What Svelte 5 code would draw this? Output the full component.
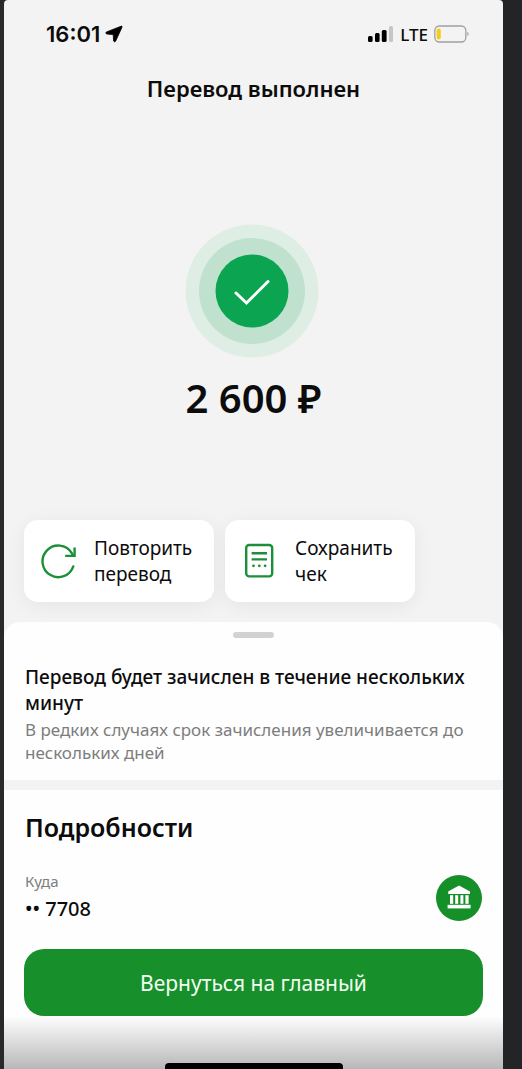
<script lang="ts">
    interface Action {
        id: string;
        icon: 'repeat' | 'receipt';
        label: string;
    }

    const actions: Action[] = [
        { id: 'repeat', icon: 'repeat', label: 'Повторить перевод' },
        { id: 'receipt', icon: 'receipt', label: 'Сохранить чек' },
    ];

    const amount = '2 600 ₽';
    const account = '•• 7708';
</script>

<div class="backdrop">
    <div class="screen">
        <header class="status-bar">
            <div class="time">
                <span>16:01</span>
                <svg width="18" height="18" viewBox="0 0 18 18" aria-hidden="true">
                    <path d="M16.2 1.2 L1.4 7 Q0 8 1.6 9 L8.2 9.6 L8.6 16 Q9.5 17.6 10.6 16.2 L17 2.2 Q17.4 0.8 16.2 1.2Z" fill="#000" stroke="#000" stroke-width="0.8" stroke-linejoin="round" />
                </svg>
            </div>
            <div class="signal">
                <svg width="26" height="17" viewBox="0 0 26 17" aria-hidden="true">
                    <rect x="0" y="10" width="4.6" height="6" rx="1.5" fill="#000" />
                    <rect x="7" y="7" width="4.6" height="9" rx="1.5" fill="#000" />
                    <rect x="13.8" y="4" width="4.8" height="12" rx="1.5" fill="#000" />
                    <rect x="21" y="0" width="4" height="16" rx="1.5" fill="#c6c6c6" />
                </svg>
                <span>LTE</span>
                <svg width="35" height="18" viewBox="0 0 35 18" aria-hidden="true">
                    <rect x="0.8" y="1" width="31" height="16" rx="4.5" fill="none" stroke="#a0a0a0" stroke-width="1.3" />
                    <rect x="2.6" y="3.4" width="4.2" height="11" rx="2" fill="#f7cb1c" />
                    <path d="M33.3 6.8 Q36 9 33.3 11.2Z" fill="#a0a0a0" />
                </svg>
            </div>
        </header>

        <main>
            <h1>Перевод выполнен</h1>

            <section class="result">
                <svg width="138" height="134" viewBox="0 0 138 134" aria-hidden="true">
                    <circle cx="67" cy="67" r="66.5" fill="#deeee5" />
                    <circle cx="67" cy="67" r="53" fill="#bfe1ce" />
                    <circle cx="67" cy="67" r="36.5" fill="#0ba551" />
                    <path d="M51 69 L61.5 79 L83 57.5" fill="none" stroke="#fff" stroke-width="3" stroke-linecap="round" stroke-linejoin="miter" />
                </svg>
                <p class="amount">{amount}</p>
            </section>

            <div class="actions">
                {#each actions as action (action.id)}
                    <button type="button" class="action">
                        {#if action.icon === 'repeat'}
                            <svg width="36" height="36" viewBox="0 0 36 36" fill="none" stroke="#1b9038" stroke-width="2.4" aria-hidden="true">
                                <path d="M33.3 23.4 A15.8 15.8 0 1 1 31.6 9.8 L33 12.5" stroke-linecap="round" />
                                <path d="M34.6 4.6 V12.9 H25.2" />
                            </svg>
                        {:else}
                            <svg width="36" height="36" viewBox="0 0 36 36" fill="none" stroke="#1b9038" stroke-width="2.4" aria-hidden="true">
                                <rect x="5.2" y="2" width="26" height="31.4" rx="3" />
                                <path d="M10.6 10.2 H26 M10.6 16.4 H26" />
                                <path d="M12.5 22.8 h.01 M18.3 22.8 h.01 M24.1 22.8 h.01" stroke-width="2.8" stroke-linecap="round" />
                            </svg>
                        {/if}
                        <span>{action.label}</span>
                    </button>
                {/each}
            </div>

            <section class="sheet">
                <div class="grabber"></div>
                <div class="notice">
                    <h2>Перевод будет зачислен в течение нескольких минут</h2>
                    <p>В редких случаях срок зачисления увеличивается до нескольких дней</p>
                </div>
                <div class="details">
                    <h3>Подробности</h3>
                    <div class="row">
                        <dl>
                            <dt>Куда</dt>
                            <dd>{account}</dd>
                        </dl>
                        <svg width="46" height="46" viewBox="0 0 46 46" aria-hidden="true">
                            <circle cx="23" cy="23" r="23" fill="#159028" />
                            <g fill="#fff">
                                <path d="M23 10.6 L34 16.6 V19 H12.2 V16.6Z" />
                                <rect x="14" y="20.2" width="3.2" height="8.6" />
                                <rect x="19.2" y="20.2" width="3" height="8.6" />
                                <rect x="24.4" y="20.2" width="3" height="8.6" />
                                <rect x="29.4" y="20.2" width="3.2" height="8.6" />
                                <rect x="11.6" y="29.8" width="23" height="3.6" />
                            </g>
                        </svg>
                    </div>
                </div>
            </section>
        </main>

        <footer>
            <button type="button" class="primary">Вернуться на главный</button>
            <div class="home-area">
                <div class="home-indicator"></div>
            </div>
        </footer>
    </div>
</div>

<style>
    :global(body) {
        margin: 0;
        background: #232426;
    }

    .backdrop {
        --green: #178f2b;
        --gutter: 20px;

        box-sizing: border-box;
        min-height: 100vh;
        padding: 0 19px 0 4px;
        display: flex;

        background: linear-gradient(to right, #2b2928 4px, #232426 4px);
        color: #0c0c0c;
        font-family: "Noto Sans", "Open Sans", sans-serif;
    }

    h1, h2, h3, p, dl, dd {
        margin: 0;
    }

    svg {
        display: block;
        flex: none;
    }

    button {
        border: 0;
        font: inherit;
        color: inherit;
        cursor: pointer;
    }

    .screen {
        flex: 1;
        min-width: 0;
        display: flex;
        flex-direction: column;

        border-radius: 4px 4px 0 0;
        background: #f3f3f3;
    }

    .status-bar {
        display: flex;
        justify-content: space-between;
        align-items: center;
        height: 68px;
        padding: 0 34px 0 42px;
    }

    .time {
        display: flex;
        align-items: center;
        gap: 5px;

        font: 600 22px/28px Inter, sans-serif;
    }

    .signal {
        display: flex;
        align-items: center;
        gap: 6px;

        font-size: 17px;
        font-weight: 500;
    }

    main {
        flex: 1;
        display: flex;
        flex-direction: column;
    }

    h1 {
        font-size: 22px;
        line-height: 40px;
        font-weight: 600;
        text-align: center;
    }

    .result {
        display: flex;
        flex-direction: column;
        align-items: center;
        gap: 14px;
        padding: 116px var(--gutter) 96px;
    }

    .amount {
        font-size: 40px;
        line-height: 52px;
        font-weight: 600;
    }

    .actions {
        display: flex;
        gap: 11px;
        padding: 0 var(--gutter) 20px;
    }

    .action {
        display: flex;
        align-items: center;
        gap: 18px;
        width: 190px;
        height: 82px;
        padding: 0 16px;

        border-radius: 14px;
        background: #fff;
        box-shadow: 0 4px 20px rgba(0, 0, 0, 0.06);
        font-size: 19px;
        line-height: 26px;
        text-align: left;
    }

    .sheet {
        flex: 1;
        padding-top: 10px;

        border-radius: 16px 16px 0 0;
        background: #fefefe;
    }

    .grabber {
        width: 41px;
        height: 6px;
        margin: 0 auto;

        border-radius: 3px;
        background: #d2d2d2;
    }

    .notice {
        padding: 26px 21px 16px;

        border-bottom: 10px solid #f3f3f3;
    }

    h2 {
        font-size: 19px;
        line-height: 26px;
        font-weight: 500;
    }

    .notice p {
        padding-top: 2px;

        color: #7d7d7d;
        font-size: 17px;
        line-height: 23px;
    }

    .details {
        padding: 20px 21px 12px;
    }

    h3 {
        font-size: 25px;
        line-height: 34px;
        font-weight: 600;
    }

    .row {
        display: flex;
        justify-content: space-between;
        align-items: center;
        padding-top: 26px;
    }

    dt {
        color: #7d7d7d;
        font-size: 15px;
        line-height: 22px;
    }

    dd {
        font-size: 20px;
        line-height: 34px;
        font-weight: 500;
    }

    footer {
        background: #fefefe;
    }

    .primary {
        display: block;
        width: calc(100% - 2 * var(--gutter));
        height: 67px;
        margin: 0 auto;

        border-radius: 20px;
        background: var(--green);
        color: #f2fff2;
        font-size: 21px;
    }

    .home-area {
        display: flex;
        justify-content: center;
        align-items: flex-end;
        height: 53px;

        background: linear-gradient(#fefefe, #b8b8b8);
    }

    .home-indicator {
        width: 178px;
        height: 6px;

        border-radius: 4px 4px 0 0;
        background: #000;
    }
</style>
